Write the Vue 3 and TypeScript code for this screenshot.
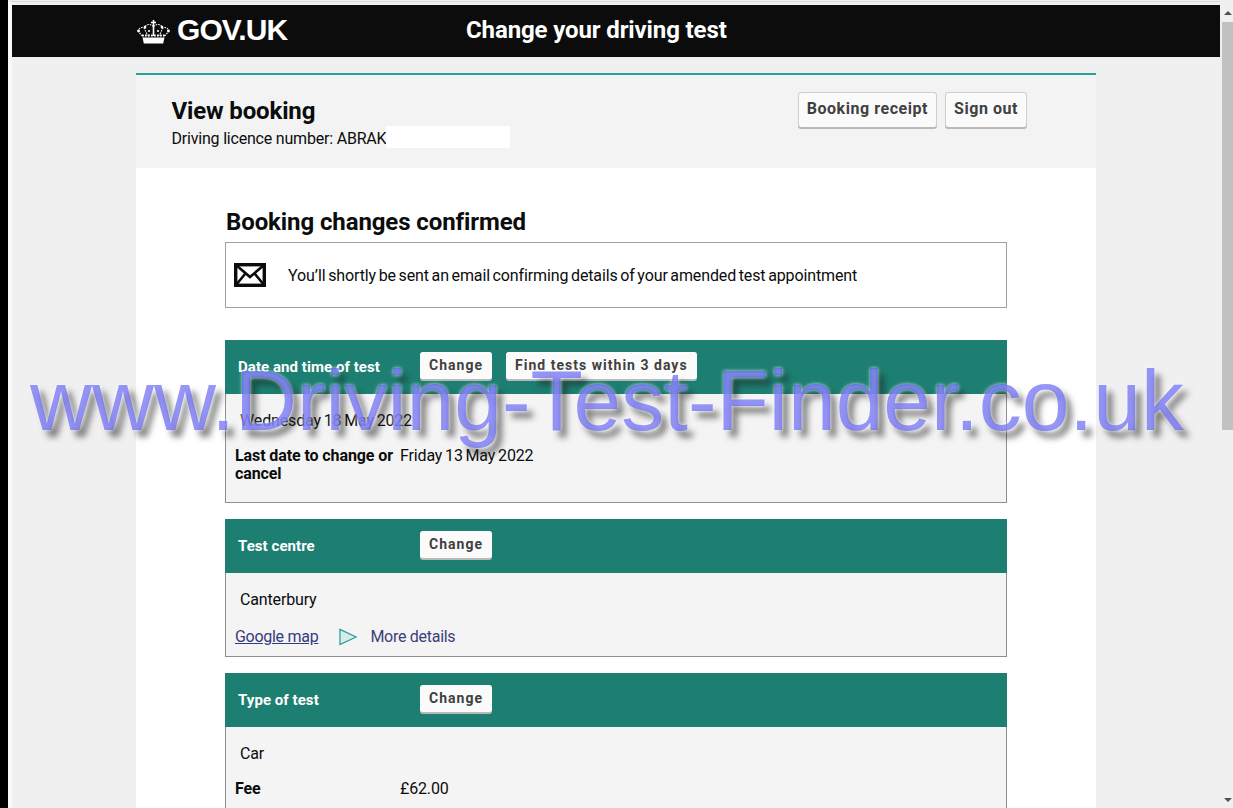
<script setup lang="ts">
interface Row { label?: string; value: string }
interface Card { title: string; actions: string[]; rows: Row[]; links?: boolean }

const cards: Card[] = [
  {
    title: 'Date and time of test',
    actions: ['Change', 'Find tests within 3 days'],
    rows: [
      { value: 'Wednesday 18 May 2022' },
      { label: 'Last date to change or cancel', value: 'Friday 13 May 2022' },
    ],
  },
  {
    title: 'Test centre',
    actions: ['Change'],
    rows: [{ value: 'Canterbury' }],
    links: true,
  },
  {
    title: 'Type of test',
    actions: ['Change'],
    rows: [{ value: 'Car' }, { label: 'Fee', value: '£62.00' }],
  },
]
</script>

<template>
  <div class="screen">
    <div class="strip"></div>
    <div class="page">
      <header class="topbar">
        <div class="logo">
          <svg class="crown" viewBox="0 0 33 25" aria-hidden="true">
            <path fill="#fff" d="M5.500 18.500h22l-1.300 6H6.800z" />
            <g fill="none" stroke="#fff" stroke-width="1.100">
              <path d="M16.500 1v16M14 3.500h5" stroke-width="1.600" />
              <path stroke-dasharray="1.600 1" d="M16.500 7.500C13 4 7.500 5 8 10c.3 2.500 2 5 3.500 7M16.500 7.500C20 4 25.500 5 25 10c-.3 2.500-2 5-3.500 7" />
              <path stroke-dasharray="1.600 1" d="M8 9.500C4.500 7 1 9.500 2 12.500c.7 2 2.500 3.500 4 5M25 9.500c3.500-2.500 7-.0 6 3-.7 2-2.500 3.500-4 5" />
              <path stroke-dasharray="1.800 1.200" stroke-width="1.800" d="M5 16.500h23" />
            </g>
            <g fill="#fff">
              <circle cx="1.500" cy="12" r="1.400" /><circle cx="31.500" cy="12" r="1.400" />
              <circle cx="8" cy="8" r="1.300" /><circle cx="25" cy="8" r="1.300" />
              <circle cx="12" cy="12" r="1.100" /><circle cx="21" cy="12" r="1.100" />
            </g>
          </svg>
          <span class="wordmark">GOV.UK</span>
        </div>
        <div class="service">Change your driving test</div>
      </header>

      <main class="wrap">
        <section class="intro">
          <div>
            <h1>View booking</h1>
            <p class="licence">Driving licence number: ABRAK<span class="redact"></span></p>
          </div>
          <div class="intro-actions">
            <button class="btn big">Booking receipt</button>
            <button class="btn big">Sign out</button>
          </div>
        </section>

        <section class="content">
          <h2>Booking changes confirmed</h2>
          <div class="notice">
            <svg class="mail" viewBox="0 0 32 24" aria-hidden="true">
              <rect x="1.700" y="1.700" width="28.600" height="20.600" fill="#fff" stroke="#0b0c0c" stroke-width="3.400" />
              <path d="M2 2l14 12L30 2M2 22l9-11M30 22l-9-11" fill="none" stroke="#0b0c0c" stroke-width="2.600" />
            </svg>
            <span class="notice-text">You’ll shortly be sent an email confirming details of your amended test appointment</span>
          </div>

          <article v-for="card in cards" :key="card.title" class="card">
            <div class="card-head">
              <strong class="card-title">{{ card.title }}</strong>
              <div class="card-actions">
                <button v-for="action in card.actions" :key="action" class="btn small">{{ action }}</button>
              </div>
            </div>
            <div class="card-body">
              <div v-for="row in card.rows" :key="row.value" class="row" :class="{ labelled: row.label }">
                <strong v-if="row.label" class="label">{{ row.label }}</strong>
                <span class="value">{{ row.value }}</span>
              </div>
              <div v-if="card.links" class="links">
                <a class="map" href="#">Google map</a>
                <svg class="tri" viewBox="0 0 20 18" aria-hidden="true">
                  <path d="M1 1l17 8-17 8z" fill="#d5ecea" stroke="#28a197" stroke-width="1.300" />
                </svg>
                <span class="more">More details</span>
              </div>
            </div>
          </article>
        </section>
      </main>
    </div>
    <aside class="scrollbar">
      <span class="arrow up"></span>
      <div class="thumb"></div>
      <span class="arrow down"></span>
    </aside>
    <div class="watermark">www.Driving-Test-Finder.co.uk</div>
  </div>
</template>

<style>
html, body { margin: 0; height: 100%; overflow: hidden; background: #f0f0f0; }
</style>

<style scoped>
.screen {
  position: relative;
  display: flex;
  width: 1233px;
  height: 808px;
  overflow: hidden;
  background: #f0f0f0;
  font-family: Roboto, "Liberation Sans", sans-serif;
  font-size: 16px;
  color: #0b0c0c;
}
.strip { width: 8px; flex: none; background: #000; }
.page {
  flex: none;
  width: 1212px;
  margin-top: 1px;
  padding-top: 3px;
  box-sizing: border-box;
  border-top: 1px solid #d8d8d8;
  border-left: 4px solid #f9f9f9;
}
.topbar {
  height: 52px;
  width: 1208px;
  background: #0c0c0c;
  color: #fff;
  display: flex;
  align-items: center;
  padding-left: 125px;
  box-sizing: border-box;
}
.logo { display: flex; align-items: center; gap: 7px; width: 329px; }
.crown { width: 33px; height: 25px; margin-top: 1px; }
.wordmark { font: 700 30px "Liberation Sans", Arial, sans-serif; letter-spacing: -0.9px; margin-top: -2px; }
.service { font-size: 24px; font-weight: 700; letter-spacing: -0.12px; margin-top: -2px; }
.wrap { width: 960px; margin: 16px 0 0 124px; border-top: 2px solid #28a197; box-sizing: border-box; }
.intro {
  height: 93px;
  background: #f3f3f3;
  box-sizing: border-box;
  padding: 18px 69px 0 35.500px;
  display: flex;
  justify-content: space-between;
}
h1 { margin: 0; font-size: 24px; line-height: 36px; font-weight: 700; letter-spacing: -0.15px; }
.licence { margin: 0; line-height: 20px; display: flex; letter-spacing: -0.2px; }
.redact { display: inline-block; width: 124px; height: 22px; margin-top: -3px; background: #fff; }
.intro-actions { display: flex; gap: 8px; align-items: flex-start; margin-top: -1px; }
.btn {
  font-family: Roboto, "Liberation Sans", sans-serif;
  font-weight: 700;
  color: #404040;
  background: #fafafa;
  border: 1px solid #cfcfcf;
  border-bottom: 0;
  border-radius: 3px;
  box-shadow: 0 2px 0 #b9b9b9;
  padding: 0;
  box-sizing: border-box;
}
.btn.big { height: 35px; padding: 0 8px 4px; font-size: 16px; letter-spacing: 0.55px; }
.btn.small { height: 27px; padding: 0 8px 2px; font-size: 14px; letter-spacing: 1.02px; background: #fbfbfb; border-color: #fff; }
.content { height: 640px; background: #fff; padding: 39px 89px 0; box-sizing: border-box; }
h2 { margin: 0 0 5px 1px; font-size: 24px; line-height: 30px; font-weight: 700; letter-spacing: -0.1px; }
.notice {
  height: 66px;
  border: 1px solid #a0a0a0;
  box-sizing: border-box;
  display: flex;
  align-items: center;
  padding-left: 8px;
  gap: 22px;
  margin-bottom: 32px;
}
.notice-text { word-spacing: -1.200px; letter-spacing: -0.12px; }
.mail { width: 32px; height: 24px; flex: none; }
.card { border: 1px solid #8f8f8f; border-top: 0; margin-bottom: 16px; background: #f4f4f4; }
.card-head {
  height: 54px;
  margin: 0 -1px;
  background: #1d7f72;
  color: #fff;
  display: flex;
  align-items: center;
  padding-left: 13px;
}
.card-title { width: 182px; flex: none; font-size: 15px; letter-spacing: 0.06px; }
.card-actions { display: flex; gap: 14px; margin-top: -4px; }
.card-body { padding: 15px 9px 0; }
.row { padding-left: 5px; min-height: 24px; line-height: 24px; margin-bottom: 14px; }
.row .value { word-spacing: -1px; letter-spacing: -0.15px; }
.row.labelled { display: flex; padding-left: 0; line-height: 18px; margin-bottom: 19px; }
.label { width: 165px; flex: none; font-size: 16px; letter-spacing: -0.1px; }
.links { display: flex; align-items: center; height: 21px; margin-bottom: 9px; letter-spacing: -0.28px; }
.map { color: #353b7e; text-decoration: underline; }
.tri { width: 19px; height: 18px; margin: 0 12px 0 21px; }
.more { color: #3b3f78; }
.scrollbar {
  flex: none;
  width: 11px;
  margin-left: 2px;
  display: flex;
  flex-direction: column;
  align-items: center;
  background: #f0f0f0;
}
.thumb { width: 100%; height: 408px; background: #c1c1c1; margin-top: 7px; }
.arrow { width: 0; height: 0; border-left: 4px solid transparent; border-right: 4px solid transparent; }
.arrow.up { border-bottom: 4px solid #505050; margin-top: 11px; }
.arrow.down { border-top: 4px solid #505050; margin-top: auto; margin-bottom: 6px; }
.watermark {
  position: absolute;
  left: 30px;
  top: 352px;
  font: 400 85.800px/96px "Liberation Sans", Arial, sans-serif;
  white-space: nowrap;
  color: rgba(80, 80, 245, 0.6);
  text-shadow: 0 0 3px rgba(255, 255, 255, 0.5), 0 0 4px rgba(255, 255, 255, 0.4), 6px 7px 6px rgba(30, 30, 30, 0.55);
  pointer-events: none;
}
</style>
